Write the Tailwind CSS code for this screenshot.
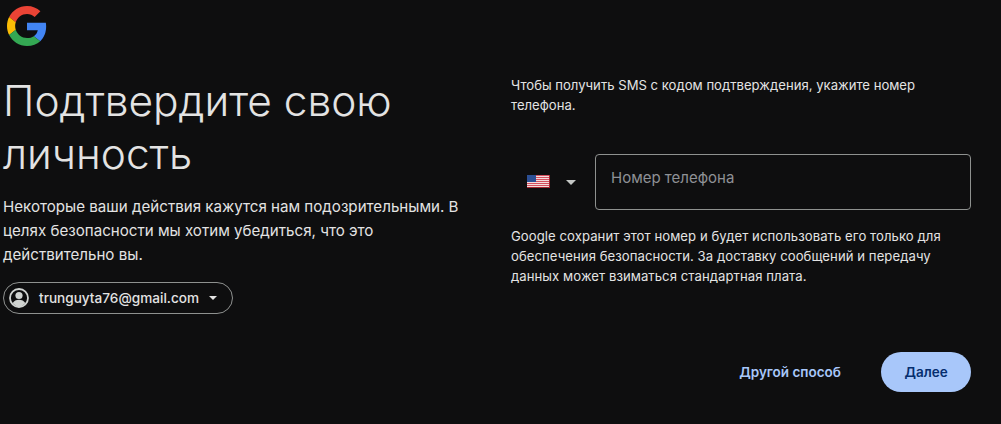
<!DOCTYPE html>
<html lang="ru">
<head>
    <meta charset="UTF-8">
    <meta name="viewport" content="width=device-width, initial-scale=1.0">
    <title>Подтвердите свою личность</title>
    <script src="https://cdn.jsdelivr.net/npm/@tailwindcss/browser@4"></script>
</head>
<body class="bg-[#0e0e0f] text-[#e3e3e3] font-['Inter',sans-serif] overflow-hidden">
    <div class="w-[1001px] h-[424px] flex">
        <!-- левая колонка -->
        <div class="w-[511px] pl-[3px] pt-[6px]">
            <svg class="ml-[4px] w-[40px] h-[40px]" viewBox="0 0 48 48">
                <path fill="#EA4335" d="M24 9.5c3.54 0 6.71 1.22 9.21 3.6l6.85-6.85C35.9 2.38 30.47 0 24 0 14.62 0 6.51 5.38 2.56 13.22l7.98 6.19C12.43 13.72 17.74 9.5 24 9.5z"/>
                <path fill="#4285F4" d="M46.98 24.55c0-1.57-.15-3.09-.38-4.55H24v9.02h12.94c-.58 2.96-2.26 5.48-4.78 7.18l7.73 6c4.51-4.18 7.09-10.36 7.09-17.65z"/>
                <path fill="#FBBC05" d="M10.53 28.59c-.48-1.45-.76-2.99-.76-4.59s.27-3.14.76-4.59l-7.98-6.19C.92 16.46 0 20.12 0 24c0 3.88.92 7.54 2.56 10.78l7.97-6.19z"/>
                <path fill="#34A853" d="M24 48c6.48 0 11.93-2.13 15.89-5.81l-7.73-6c-2.15 1.45-4.92 2.3-8.16 2.3-6.26 0-11.57-4.22-13.47-9.91l-7.98 6.19C6.51 42.62 14.62 48 24 48z"/>
            </svg>
            <h1 class="mt-[28px] w-[440px] text-[42.4px] leading-[53px] font-[350] text-[#e3e3e3]">Подтвердите свою личность</h1>
            <p class="mt-[15px] w-[470px] text-[15.13px] leading-[24px]">Некоторые ваши действия кажутся нам подозрительными. В целях безопасности мы хотим убедиться, что это действительно вы.</p>
            <div class="mt-[15px] w-[230px] h-[32px] rounded-full border border-[#8e918f] flex items-center pl-[5px]">
                <svg class="w-[20px] h-[20px]" viewBox="0 0 20 20">
                    <circle cx="10" cy="10" r="9" fill="none" stroke="#d0d3d1" stroke-width="1.8"/>
                    <circle cx="10" cy="7.5" r="3.6" fill="#d0d3d1"/>
                    <path fill="#d0d3d1" d="M3.6 15.2c1.3-2.3 3.7-3.4 6.4-3.4s5.1 1.1 6.4 3.4A8.2 8.2 0 0 1 10 18.2a8.2 8.2 0 0 1-6.4-3z"/>
                </svg>
                <span class="ml-[10px] w-[160px] text-[13.6px] font-medium whitespace-nowrap">trunguyta76@gmail.com</span>
                <span class="ml-[10px] w-0 h-0 border-x-[4.5px] border-x-transparent border-t-[4.5px] border-t-[#e3e3e3]"></span>
            </div>
        </div>
        <!-- правая колонка -->
        <div class="w-[460px] pt-[75px]">
            <p class="text-[13.13px] leading-[20px] w-[430px]">Чтобы получить SMS с кодом подтверждения, укажите номер телефона.</p>
            <div class="mt-[39px] flex">
                <div class="w-[84px] h-[56px] flex items-center pl-[16px]">
                    <svg class="w-[23px] h-[13px] mt-[-2px]" viewBox="0 0 23 13">
                        <rect width="23" height="13" fill="#f3dcdc"/>
                        <path fill="#d4505f" d="M0 0h23v1H0zM0 2h23v1H0zM0 4h23v1H0zM0 6h23v1H0zM0 8h23v1H0zM0 10h23v1H0z"/>
                        <path fill="#a5242f" d="M0 12h23v1H0zM22 0h1v13h-1z"/>
                        <rect width="9" height="7" fill="#2c4f94"/>
                    </svg>
                    <span class="ml-[16px] w-0 h-0 border-x-[5px] border-x-transparent border-t-[5px] border-t-[#c4c7c5]"></span>
                </div>
                <div class="w-[376px] h-[56px] rounded-[4px] border border-[#8e918f] pl-[15px] pt-[13px] text-[15px] leading-[20px] text-[#8e9196]">Номер телефона</div>
            </div>
            <p class="mt-[16px] text-[13.13px] leading-[20px] w-[450px] tracking-[0.06px]">Google сохранит этот номер и будет использовать его только для обеспечения безопасности. За доставку сообщений и передачу данных может взиматься стандартная плата.</p>
            <div class="mt-[66px] flex items-center justify-end gap-[40px]">
                <span class="text-[13.5px] font-semibold text-[#a8c7fa]">Другой способ</span>
                <button class="w-[90px] h-[40px] rounded-full bg-[#a8c7fa] text-[#062e6f] text-[13.5px] font-semibold">Далее</button>
            </div>
        </div>
    </div>
</body>
</html>
